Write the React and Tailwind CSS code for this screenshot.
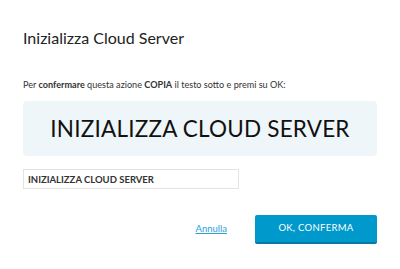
export default function App() {
  return (
    <div className="w-[400px] h-[269px] bg-white font-['Lato','Liberation_Sans',sans-serif] text-[#222]">
      <div className="px-[23px] pt-[28px]">
        {/* Title */}
        <h1 className="text-[16px] leading-[20px] text-[#222]">Inizializza Cloud Server</h1>

        {/* Instruction */}
        <p className="mt-[31px] text-[9.1px] leading-[12px] text-[#333]">
          Per <b>confermare</b> questa azione <b>COPIA</b> il testo sotto e premi su OK:
        </p>

        {/* Text to copy */}
        <div className="mt-[10px] h-[55px] rounded-[4px] bg-[#eff6fa] flex items-center justify-center">
          <span className="text-[22.5px] leading-[26px] text-[#111] tracking-[0.2px]">INIZIALIZZA CLOUD SERVER</span>
        </div>

        {/* Input */}
        <input
          readOnly
          value="INIZIALIZZA CLOUD SERVER"
          className="mt-[13px] block w-[216px] h-[20px] border border-[#e3e3e3] px-[4px] text-[9.5px] font-bold text-[#333] outline-none"
        />

        {/* Actions */}
        <div className="mt-[26px] flex items-center justify-end gap-[28px]">
          <a href="#" className="text-[9.5px] text-[#2aa2d8] underline">Annulla</a>
          <button className="w-[122px] h-[29px] rounded-[2px] bg-[#0099cc] border-b-2 border-[#0b78a3] text-white text-[9.5px] tracking-[0.3px]">
            OK, CONFERMA
          </button>
        </div>
      </div>
    </div>
  );
}
